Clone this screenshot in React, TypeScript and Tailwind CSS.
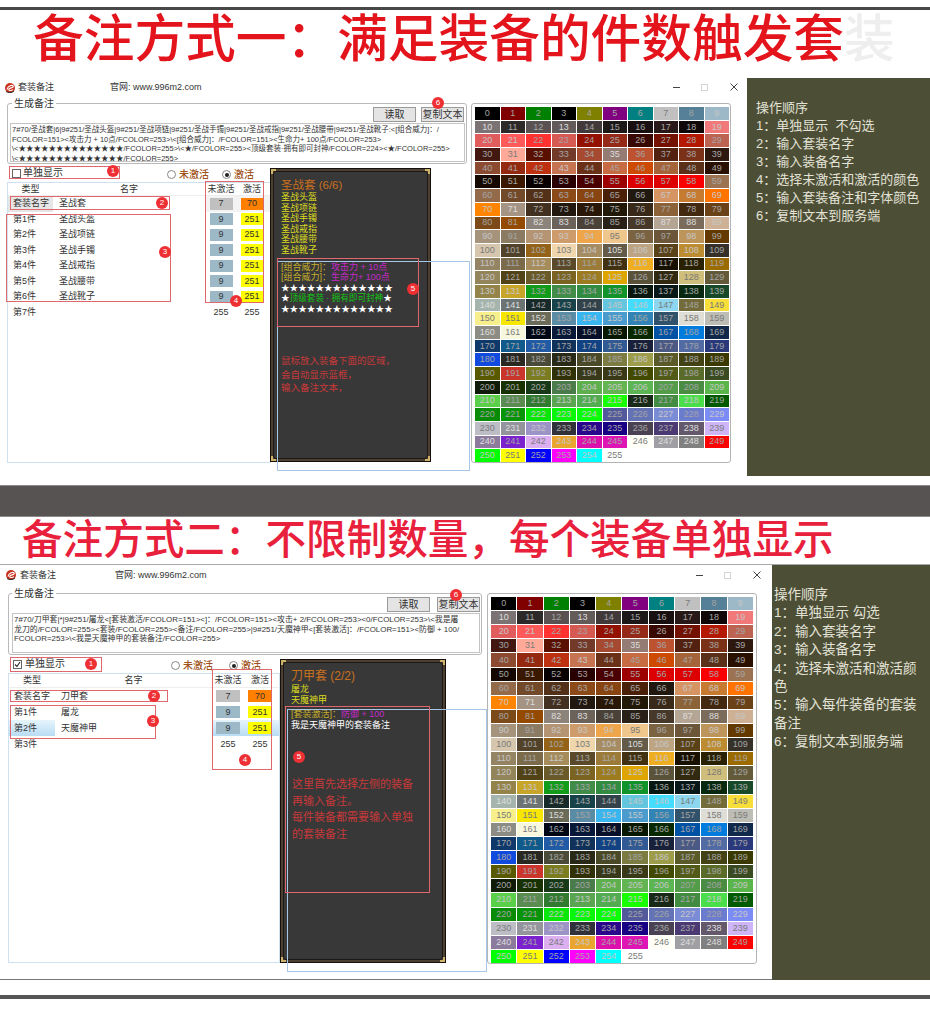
import React from "react";

const PALETTE = [
  "#000000","#800000","#008000","#000000","#808000","#800080","#008080","#c0c0c0","#558097","#9db9c8",
  "#7b7373","#2d2929","#5a5252","#635a5a","#423a3a","#1d1818","#181010","#291818","#100808","#f27979",
  "#e15c5c","#ff5a5a","#ff3131","#d65a52","#941000","#942918","#390800","#731000","#b51800","#bd6352",
  "#421810","#ffaa99","#5a1000","#733929","#a54a31","#947b73","#bd5231","#522110","#7b3118","#2d1810",
  "#8c4a31","#942910","#bd3110","#c67352","#6b3118","#c66b42","#ce4a00","#a56339","#5a3118","#2a1000",
  "#150800","#3a1800","#080000","#290000","#4a0000","#9d0000","#dc0000","#de0000","#fb0000","#9c7352",
  "#946b4a","#734a29","#523118","#8c4a18","#884411","#4a2108","#211810","#d69463","#c67b31","#ff7300",
  "#ff8400","#a59484","#423121","#21180f","#291808","#211808","#392918","#8c6339","#422910","#6b4218",
  "#7b4a18","#944a00","#8c847b","#6b635a","#4a4239","#292118","#463929","#b5a594","#7b6b5a","#ceb194",
  "#a5947b","#8c7b63","#b59473","#ce9c6b","#efa54a","#efc68c","#7b6342","#6b5639","#bd945a","#633900",
  "#d6c6ad","#524229","#946318","#efd6ad","#a58c63","#635a4a","#bda584","#5a4218","#bd8c31","#353129",
  "#948463","#7b6b4a","#a58c5a","#5a4a29","#9c7b39","#423110","#efad21","#181000","#292100","#9c6b00",
  "#94845a","#524218","#6b5a29","#7b6321","#9c7b21","#dea500","#5a5239","#312910","#cebd7b","#635a39",
  "#94844a","#c6a529","#109c18","#428c4a","#318c42","#109429","#081810","#081818","#082910","#184a29",
  "#a5b5ad","#6b7373","#182929","#18424a","#31424a","#63c6de","#44ddff","#8cd6ef","#736b39","#f7de39",
  "#f7ef8c","#f7e700","#6b6b5a","#5a8ca5","#39b5ef","#4a9cce","#3184b5","#31526b","#deded6","#bdbdb5",
  "#8c8c84","#f7f7de","#000818","#081839","#081029","#081800","#082900","#0052a5","#007bde","#10294a",
  "#10396b","#105a8c","#215aa5","#10315a","#104284","#315a94","#182139","#4a5a84","#526ba5","#29397b",
  "#104ade","#292921","#4a4a39","#292918","#4a4a29","#7b7b42","#9c9c4a","#5a5a29","#424214","#393900",
  "#595900","#ca352c","#7b7b20","#313108","#37391a","#393918","#424a00","#525a18","#5a6b29","#3a4a21",
  "#101c08","#183100","#183918","#4a7b4a","#5eb04e","#63b552","#5ab552","#529c4a","#4a8c42","#5ab54a",
  "#5acf4a","#5a8c52","#317b31","#5aa552","#52ad52","#18ff00","#182918","#428c42","#4ade4a","#005a00",
  "#088c08","#089408","#08e708","#08f708","#08ff08","#525a9c","#6373b5","#7b8cd6","#6b7bce","#7b8cf7",
  "#bdbdc6","#94949c","#9c94c6","#31313a","#29088c","#180084","#4a4252","#4a3973","#63596b","#ceb5f7",
  "#8c7b9c","#7b21ce","#dcb0f0","#e9a52f","#de10ad","#de14b5","#fffff7","#a0a0a4","#808080","#ff0000",
  "#00ff00","#ffff00","#0000ff","#ff00ff","#00ffff","#ffffff",
];

function numberColor(hex: string) {
  const r = parseInt(hex.slice(1, 3), 16);
  const g = parseInt(hex.slice(3, 5), 16);
  const b = parseInt(hex.slice(5, 7), 16);
  const lum = 0.3 * r + 0.59 * g + 0.11 * b;
  const sat = Math.max(r, g, b) - Math.min(r, g, b);
  if (lum > 185) return "#7a7a7a";
  if (lum > 90 && sat < 40) return "#dedede";
  if (lum > 130) return "#c6c6c6";
  return "#a4a4a4";
}

function Palette({ boxClass, gridClass }: { boxClass: string; gridClass: string }) {
  return (
    <div className={`shrink-0 rounded-[3px] border border-[#b4b4b4] ${boxClass}`}>
      <div className={`grid grid-cols-10 grid-rows-[repeat(26,1fr)] gap-px ${gridClass}`}>
        {PALETTE.map((c, i) => (
          <div
            key={i}
            className="flex items-center justify-center overflow-hidden text-[9px] leading-none"
            style={{ backgroundColor: c, color: numberColor(c) }}
          >
            {i}
          </div>
        ))}
      </div>
    </div>
  );
}

function Logo() {
  return (
    <svg width="10" height="10" viewBox="0 0 10 10" className="shrink-0">
      <circle cx="5" cy="5" r="5" fill="#c8321e" />
      <path d="M2 6.5C3 2.5 7.5 1.5 8.2 3.2C8.8 5 4.6 4.6 3.8 6.2C3.2 7.6 6.2 8 8 6.6" fill="none" stroke="#fff" strokeWidth="1.1" />
      <path d="M1 8.5C3 10 7 10 9 8" fill="none" stroke="#333" strokeWidth="1" />
    </svg>
  );
}

function WinControls({ className }: { className: string }) {
  return (
    <div className={`absolute flex items-center ${className}`}>
      <svg width="7" height="7" viewBox="0 0 7 7"><path d="M0 3.5H7" stroke="#444" /></svg>
      <svg width="7" height="7" viewBox="0 0 7 7" className="ml-[21px]"><rect x="0.5" y="0.5" width="6" height="6" fill="none" stroke="#d4d4d4" /></svg>
      <svg width="8" height="8" viewBox="0 0 8 8" className="ml-[22px]"><path d="M0.5 0.5L7.5 7.5M7.5 0.5L0.5 7.5" stroke="#444" /></svg>
    </div>
  );
}

function Badge({ n, className }: { n: number; className: string }) {
  return (
    <div className={`absolute flex h-3 w-3 items-center justify-center rounded-full bg-[#ee2f33] text-[8px] leading-none text-white ${className}`}>
      {n}
    </div>
  );
}

function RedBox({ className }: { className: string }) {
  return <div className={`pointer-events-none absolute border border-[#e0686c] ${className}`} />;
}

function Btn({ children, className = "" }: { children: React.ReactNode; className?: string }) {
  return (
    <div className={`flex h-[15px] w-[43px] items-center justify-center whitespace-nowrap border border-[#9a9a9a] bg-[#e4e4e4] text-[10px] leading-none text-[#333] ${className}`}>
      {children}
    </div>
  );
}

function Check({ checked }: { checked?: boolean }) {
  return (
    <span className="flex h-[9px] w-[9px] shrink-0 items-center justify-center border border-[#666] bg-white">
      {checked && (
        <svg width="7" height="7" viewBox="0 0 7 7"><path d="M1 3.5L3 5.5L6 1" fill="none" stroke="#222" strokeWidth="1.1" /></svg>
      )}
    </span>
  );
}

function Radio({ checked }: { checked?: boolean }) {
  return (
    <span className="flex h-[9px] w-[9px] shrink-0 items-center justify-center rounded-full border border-[#888] bg-white">
      {checked && <span className="h-[4px] w-[4px] rounded-full bg-[#222]" />}
    </span>
  );
}

function RadioRow({ className, gapClass }: { className: string; gapClass: string }) {
  return (
    <div className={`flex items-center text-[10px] leading-none text-[#a0521a] ${className}`}>
      <Radio />
      <span className="ml-[3px] w-[30px] whitespace-nowrap font-medium">未激活</span>
      <span className={gapClass}><Radio checked /></span>
      <span className="ml-[3px] whitespace-nowrap font-medium">激活</span>
    </div>
  );
}

type RowProps = {
  gridClass: string;
  heightClass: string;
  swatchClass: string;
  nameClass: string;
  label: string;
  name?: string;
  off: number;
  on: number;
  offBg?: string;
  onBg?: string;
  rowClass?: string;
  labelClass?: string;
  nameBgClass?: string;
};

function Row({ gridClass, heightClass, swatchClass, nameClass, label, name, off, on, offBg, onBg, rowClass = "", labelClass = "", nameBgClass = "" }: RowProps) {
  return (
    <div className={`grid items-center text-[9px] leading-none text-[#333] ${gridClass} ${heightClass} ${rowClass}`}>
      <div className={`flex h-full items-center whitespace-nowrap ${labelClass}`}>{label}</div>
      <div className={`flex h-full items-center whitespace-nowrap ${nameClass} ${nameBgClass}`}>{name}</div>
      <div className="flex justify-center"><div className={`flex items-center justify-center ${swatchClass} ${offBg ?? ""}`}>{off}</div></div>
      <div className="flex justify-center"><div className={`flex items-center justify-center ${swatchClass} ${onBg ?? ""}`}>{on}</div></div>
    </div>
  );
}

function Corner({ className }: { className: string }) {
  return <div className={`absolute h-[5px] w-[5px] border-[#cdb46a] ${className}`} />;
}

function Frame({ className, children }: { className: string; children: React.ReactNode }) {
  return (
    <div className={`relative shrink-0 border border-[#14100c] bg-[#4e3f33] p-[2px] ${className}`}>
      <div className="h-full rounded-[3px] border border-[#1c1815] bg-[#383838]">{children}</div>
      <Corner className="left-0 top-0 border-l-2 border-t-2" />
      <Corner className="right-0 top-0 border-r-2 border-t-2" />
      <Corner className="bottom-0 left-0 border-b-2 border-l-2" />
      <Corner className="bottom-0 right-0 border-b-2 border-r-2" />
    </div>
  );
}

const STARS = "★★★★★★★★★★★★★";

const rows1 = [
  ["第1件", "圣战头盔"],
  ["第2件", "圣战项链"],
  ["第3件", "圣战手镯"],
  ["第4件", "圣战戒指"],
  ["第5件", "圣战腰带"],
  ["第6件", "圣战靴子"],
];

const text1 = [
  "7#70/圣战套|6|9#251/圣战头盔|9#251/圣战项链|9#251/圣战手镯|9#251/圣战戒指|9#251/圣战腰带|9#251/圣战靴子:<[组合威力]：/",
  "FCOLOR=151><攻击力 + 10点/FCOLOR=253>\\<[组合威力]：/FCOLOR=151><生命力+ 100点/FCOLOR=253>",
  "\\<★★★★★★★★★★★★★★/FCOLOR=255>\\<★/FCOLOR=255><顶级套装·拥有即可封神/FCOLOR=224><★/FCOLOR=255>",
  "\\<★★★★★★★★★★★★★★/FCOLOR=255>",
];

const text2 = [
  "7#70/刀甲套|*|9#251/屠龙<[套装激活/FCOLOR=151><]：/FCOLOR=151><攻击+ 2/FCOLOR=253><0/FCOLOR=253>\\<我是屠",
  "龙刀的/FCOLOR=255><套装/FCOLOR=255><备注/FCOLOR=255>|9#251/天魔神甲<[套装激活]：/FCOLOR=151><防御 + 100/",
  "FCOLOR=253>\\<我是天魔神甲的套装备注/FCOLOR=255>",
];

const steps1 = ["操作顺序", "1：单独显示  不勾选", "2：输入套装名字", "3：输入装备名字", "4：选择未激活和激活的颜色", "5：输入套装备注和字体颜色", "6：复制文本到服务端"];
const steps2 = ["操作顺序", "1：单独显示 勾选", "2：输入套装名字", "3：输入装备名字", "4：选择未激活和激活颜", "色", "5：输入每件装备的套装", "备注", "6：复制文本到服务端"];

function Legend({ className }: { className: string }) {
  return <div className={`absolute bg-white px-[2px] text-[10px] leading-none text-[#333] ${className}`}>生成备注</div>;
}

function FirstSection() {
  const g = "grid-cols-[45px_152px_32px_30px]";
  const common = { gridClass: g, heightClass: "h-[15.5px]", swatchClass: "h-[12px] w-[23px]", nameClass: "pl-[6px]" };
  return (
    <div className="flex h-[398px] shrink-0">
      <div className="relative h-full w-[747px] shrink-0 bg-white">
        <div className="flex h-[18px] items-center pl-[5px] pt-[1px] text-[9px] leading-none text-[#333]">
          <Logo />
          <span className="ml-[3px] w-[92px] whitespace-nowrap">套装备注</span>
          <span className="whitespace-nowrap">官网: www.996m2.com</span>
        </div>
        <WinControls className="left-[673px] top-[5px]" />
        <div className="mt-[7px] flex">
          <div className="ml-[7px] w-[464px] shrink-0">
            <div className="relative h-[61px] w-[460px] rounded-[3px] border border-[#b9b9b9]">
              <Legend className="-top-[5px] left-[4px]" />
              <div className="flex justify-end gap-[5px] pr-[2px] pt-[3px]">
                <Btn>读取</Btn>
                <Btn>复制文本</Btn>
              </div>
              <div className="ml-[2px] mt-[1px] h-[39px] w-[455px] overflow-hidden border border-[#c4c4c4] px-[1px] pt-[1px] text-[7.5px] leading-[9.5px] text-[#333]">
                {text1.map((t) => <div key={t} className="whitespace-nowrap">{t}</div>)}
              </div>
            </div>
            <div className="flex">
              <div className="w-[263px] shrink-0">
                <div className="flex h-[18px] items-center pl-[5px] text-[10px] leading-none text-[#333]">
                  <Check />
                  <span className="ml-[2px] w-[144px] whitespace-nowrap">单独显示</span>
                  <RadioRow className="mt-[3px]" gapClass="ml-[13px]" />
                </div>
                <div className="h-[281px] w-[264px] border border-[#cfe0ee] bg-white">
                  <div className={`grid h-[13px] items-center border-b border-[#eee] text-center text-[9px] leading-none text-[#333] ${g}`}>
                    <div>类型</div><div>名字</div><div className="whitespace-nowrap">未激活</div><div>激活</div>
                  </div>
                  <Row {...common} label="套装名字" name="圣战套" off={7} on={70} offBg="bg-[#c0c0c0]" onBg="bg-[#ff7f00]" labelClass="bg-[#e6e6e6] pl-[5px]" rowClass="bg-[#f3f3f3]" nameBgClass="bg-white" />
                  {rows1.map(([a, b]) => (
                    <Row key={a} {...common} label={a} name={b} off={9} on={251} offBg="bg-[#9db9c8]" onBg="bg-[#ffff00]" labelClass="pl-[5px]" />
                  ))}
                  <Row {...common} label="第7件" off={255} on={255} labelClass="pl-[5px]" />
                </div>
              </div>
              <Frame className="ml-0 mt-[4px] h-[294px] w-[161px]">
                <div className="pl-[7px] pt-[6px]">
                  <div className="whitespace-nowrap text-[11.5px] leading-[14px] text-[#c8701e]">圣战套 (6/6)</div>
                  {rows1.map(([, b]) => <div key={b} className="text-[9px] leading-[10.5px] text-[#dcdc20]">{b}</div>)}
                  <div className="mt-[7px] text-[9px] leading-[10.4px]">
                    <div className="whitespace-nowrap"><span className="text-[#c8b028]">[组合威力]：</span><span className="text-[#c428c8]">攻击力 + 10点</span></div>
                    <div className="whitespace-nowrap"><span className="text-[#c8b028]">[组合威力]：</span><span className="text-[#c428c8]">生命力+ 100点</span></div>
                    <div className="whitespace-nowrap text-[8.6px] text-white">{STARS}</div>
                    <div className="whitespace-nowrap text-[8.6px] text-white">★<span className="text-[#12c412]">顶级套装 · 拥有即可封神</span>★</div>
                    <div className="whitespace-nowrap text-[8.6px] text-white">{STARS}</div>
                  </div>
                  <div className="mt-[40px] text-[9.5px] leading-[13.5px] text-[#c8383a]">
                    <div>鼠标放入装备下面的区域，</div>
                    <div>会自动显示蓝框，</div>
                    <div>输入备注文本，</div>
                  </div>
                </div>
              </Frame>
            </div>
          </div>
          <Palette boxClass="h-[360px] w-[260px] pl-[3px] pt-[3px]" gridClass="h-[355px] w-[254px]" />
        </div>

        <div className="pointer-events-none absolute left-[277px] top-[183px] h-[210px] w-[193px] border border-[#a6c8e6]" />
        <RedBox className="left-[9px] top-[88px] h-[13px] w-[111px]" />
        <RedBox className="left-[10px] top-[118px] h-[14px] w-[160px]" />
        <RedBox className="left-[6px] top-[136px] h-[88px] w-[165px]" />
        <RedBox className="left-[205px] top-[103px] h-[122px] w-[59px]" />
        <RedBox className="left-[277px] top-[180px] h-[69px] w-[142px] border-[#b8383c]" />
        <Badge n={1} className="left-[107px] top-[87px]" />
        <Badge n={2} className="left-[156px] top-[119px]" />
        <Badge n={3} className="left-[159px] top-[168px]" />
        <Badge n={4} className="left-[230px] top-[217px]" />
        <Badge n={5} className="left-[407px] top-[205px]" />
        <Badge n={6} className="left-[432px] top-[19px]" />
      </div>
      <div className="h-full flex-1 bg-[#4d4e36] pl-[9px] pt-[21px] text-[13px] leading-[18px] text-[#e2e2d6]">
        {steps1.map((s) => <div key={s} className="whitespace-pre">{s}</div>)}
      </div>
    </div>
  );
}

function SecondSection() {
  const g = "grid-cols-[46px_157px_32px_32px]";
  const common = { gridClass: g, heightClass: "h-[16px]", swatchClass: "h-[12px] w-[24px]", nameClass: "pl-[6px]" };
  return (
    <div className="flex h-[416px] shrink-0 border-t border-[#a8a8a8]">
      <div className="relative h-full w-[772px] shrink-0 border-b border-[#777] bg-white">
        <div className="flex h-[20px] items-center pl-[6px] text-[9px] leading-none text-[#333]">
          <Logo />
          <span className="ml-[4px] w-[95px] whitespace-nowrap">套装备注</span>
          <span className="whitespace-nowrap">官网: www.996m2.com</span>
        </div>
        <WinControls className="left-[696px] top-[6px]" />
        <div className="mt-[8px] flex">
          <div className="ml-[8px] w-[478px] shrink-0">
            <div className="relative h-[62px] w-[474px] rounded-[3px] border border-[#b9b9b9]">
              <Legend className="-top-[5px] left-[3px]" />
              <div className="flex justify-end gap-[7px] pr-[1px] pt-[3px]">
                <Btn>读取</Btn>
                <Btn>复制文本</Btn>
              </div>
              <div className="ml-[3px] mt-[1px] h-[40px] w-[468px] overflow-hidden border border-[#c4c4c4] px-[1px] pt-[1px] text-[7.9px] leading-[9.6px] text-[#333]">
                {text2.map((t) => <div key={t} className="whitespace-nowrap">{t}</div>)}
              </div>
            </div>
            <div className="flex">
              <div className="w-[272px] shrink-0">
                <div className="flex h-[18px] items-center pl-[5px] text-[10px] leading-none text-[#333]">
                  <Check checked />
                  <span className="ml-[3px] w-[146px] whitespace-nowrap">单独显示</span>
                  <RadioRow className="mt-[3px]" gapClass="ml-[16px]" />
                </div>
                <div className="h-[290px] w-[272px] border border-[#cfe0ee] bg-white">
                  <div className={`grid h-[14px] items-center border-b border-[#eee] text-center text-[9px] leading-none text-[#333] ${g}`}>
                    <div>类型</div><div>名字</div><div className="whitespace-nowrap">未激活</div><div>激活</div>
                  </div>
                  <Row {...common} label="套装名字" name="刀甲套" off={7} on={70} offBg="bg-[#c0c0c0]" onBg="bg-[#ff7f00]" labelClass="pl-[5px]" />
                  <Row {...common} label="第1件" name="屠龙" off={9} on={251} offBg="bg-[#9db9c8]" onBg="bg-[#ffff00]" labelClass="pl-[5px]" />
                  <Row {...common} label="第2件" name="天魔神甲" off={9} on={251} offBg="bg-[#9db9c8]" onBg="bg-[#ffff00]" labelClass="pl-[5px]" rowClass="bg-gradient-to-b from-[#e6f4fc] to-[#b8dcf4]" nameBgClass="bg-white" />
                  <Row {...common} label="第3件" off={255} on={255} labelClass="pl-[5px]" />
                </div>
              </div>
              <Frame className="mt-[4px] h-[304px] w-[166px]">
                <div className="pl-[7px] pt-[5px]">
                  <div className="whitespace-nowrap text-[12px] leading-[16px] text-[#c8701e]">刀甲套 (2/2)</div>
                  <div className="text-[9px] leading-[11px] text-[#dcdc20]">屠龙</div>
                  <div className="text-[9px] leading-[11px] text-[#dcdc20]">天魔神甲</div>
                  <div className="mt-[3px] text-[9px] leading-[11px]">
                    <div className="whitespace-nowrap"><span className="text-[#c8b028]">[套装激活]：</span><span className="text-[#c428c8]">防御 + 100</span></div>
                    <div className="whitespace-nowrap text-white">我是天魔神甲的套装备注</div>
                  </div>
                  <div className="ml-px mt-[45px] text-[11px] leading-[16.6px] text-[#c8383a]">
                    <div className="whitespace-nowrap">这里首先选择左侧的装备</div>
                    <div className="whitespace-nowrap">再输入备注。</div>
                    <div className="whitespace-nowrap">每件装备都需要输入单独</div>
                    <div className="whitespace-nowrap">的套装备注</div>
                  </div>
                </div>
              </Frame>
            </div>
          </div>
          <Palette boxClass="ml-px h-[371px] w-[270px] pl-[3px] pt-[3px]" gridClass="h-[366px] w-[262px]" />
        </div>

        <div className="pointer-events-none absolute left-[287px] top-[144px] h-[263px] w-[200px] border border-[#a6c8e6]" />
        <RedBox className="left-[10px] top-[92px] h-[15px] w-[92px]" />
        <RedBox className="left-[10px] top-[125px] h-[12px] w-[158px]" />
        <RedBox className="left-[10px] top-[140px] h-[34px] w-[146px]" />
        <RedBox className="left-[212px] top-[104px] h-[101px] w-[60px]" />
        <RedBox className="left-[285px] top-[141px] h-[187px] w-[145px] border-[#b8383c]" />
        <Badge n={1} className="left-[85px] top-[93px]" />
        <Badge n={2} className="left-[148px] top-[125px]" />
        <Badge n={3} className="left-[147px] top-[150px]" />
        <Badge n={4} className="left-[239px] top-[189px]" />
        <Badge n={5} className="left-[293px] top-[186px]" />
        <Badge n={6} className="left-[450px] top-[24px]" />
      </div>
      <div className="h-[415px] flex-1 bg-[#4d4e36] pl-[2px] pt-[21px] text-[13.5px] leading-[18.4px] text-[#e2e2d6]">
        {steps2.map((s) => <div key={s} className="whitespace-pre">{s}</div>)}
      </div>
    </div>
  );
}

export default function App() {
  return (
    <div className="flex h-[1012px] w-[930px] flex-col overflow-hidden bg-white font-['Liberation_Sans','Noto_Sans_CJK_SC',sans-serif]">
      <div className="mt-[7px] h-[3px] shrink-0 bg-[#484848]" />
      <div className="h-[68px] shrink-0 whitespace-nowrap pl-[33px] text-[50.7px] font-medium leading-[60px] text-[#e4141c]">
        备注方式一：满足装备的件数触发套<span className="text-[#eeeeee]">装</span>
      </div>
      <FirstSection />
      <div className="mt-[9px] h-[32px] shrink-0 border-y border-[#8a8a8a] bg-[#575352]" />
      <div className="h-[47px] shrink-0 whitespace-nowrap pl-[22px] text-[40.6px] font-medium leading-[47px] text-[#e8203c]">
        备注方式二：不限制数量，每个装备单独显示
      </div>
      <SecondSection />
      <div className="mt-[15px] h-[4px] shrink-0 bg-[#555]" />
    </div>
  );
}
